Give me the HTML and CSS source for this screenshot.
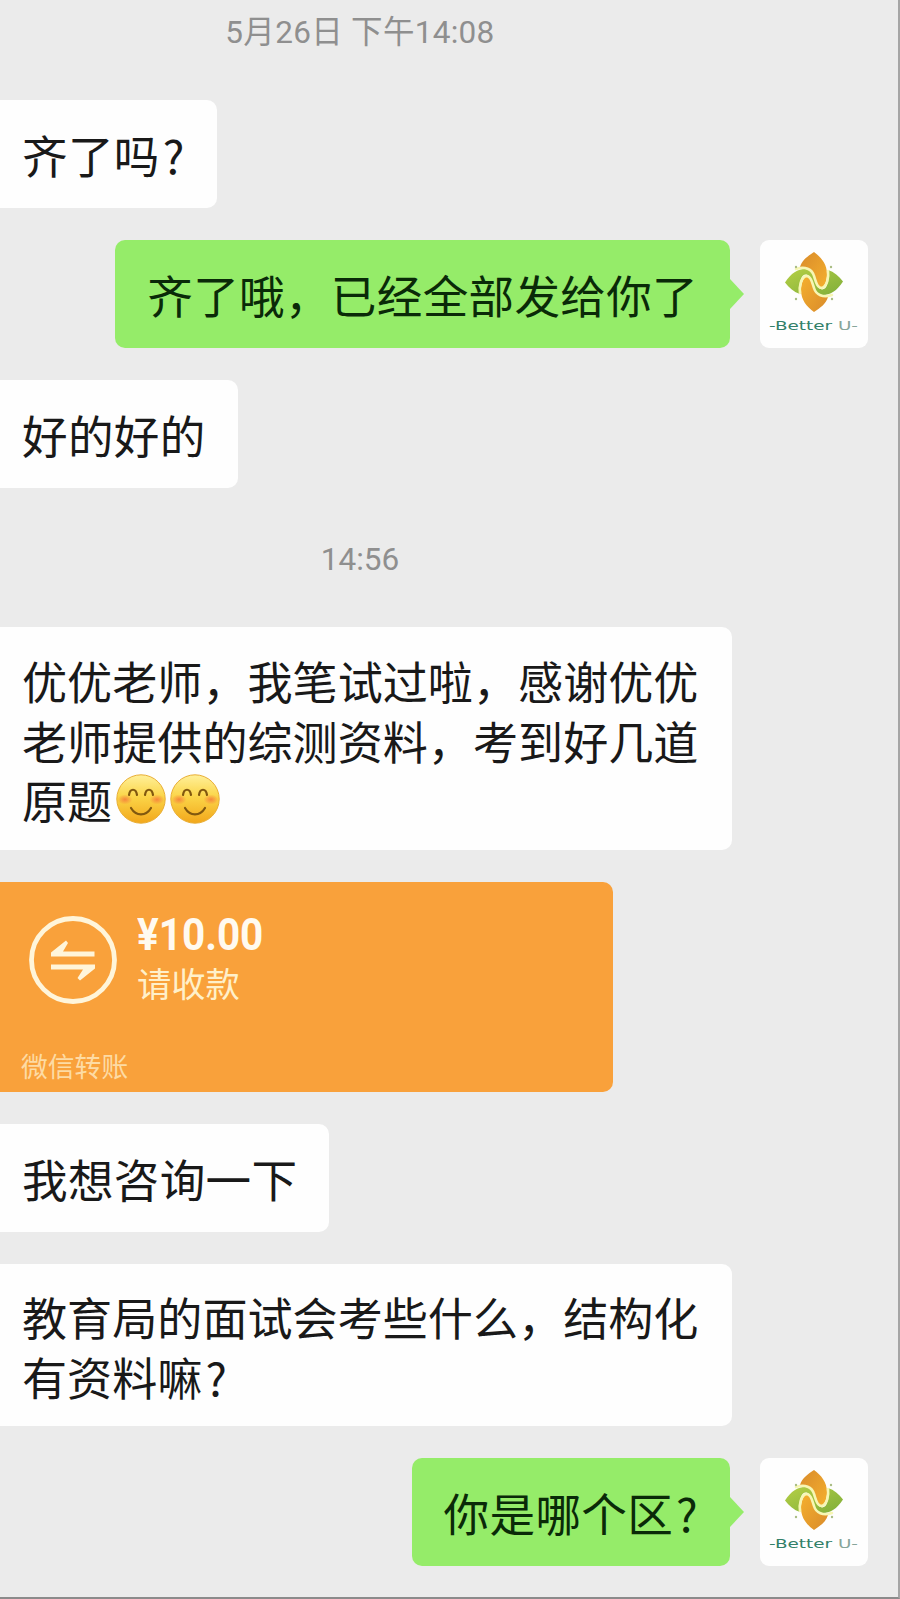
FILE: index.html
```html
<!DOCTYPE html>
<html lang="zh-CN">
<head>
<meta charset="utf-8">
<title>聊天</title>
<link rel="stylesheet" href="styles.css">
</head>
<body>
<svg class="defs" width="0" height="0" aria-hidden="true">
  <defs>
    <linearGradient id="gold" x1="0" y1="0" x2="1" y2="1"><stop offset="0" stop-color="#d98b2b"/><stop offset="1" stop-color="#f5b02e"/></linearGradient>
    <linearGradient id="leaf" x1="0" y1="0" x2="1" y2="1"><stop offset="0" stop-color="#b5cf45"/><stop offset="1" stop-color="#7fae3a"/></linearGradient>
    <linearGradient id="face" x1="0" y1="0" x2="0" y2="1"><stop offset="0" stop-color="#fff09a"/><stop offset=".45" stop-color="#fbd548"/><stop offset="1" stop-color="#f2a71b"/></linearGradient>
    <radialGradient id="blush"><stop offset="0" stop-color="#f57a3c" stop-opacity=".85"/><stop offset="1" stop-color="#f57a3c" stop-opacity="0"/></radialGradient>
    <symbol id="smile" viewBox="0 0 54 54">
      <circle cx="27" cy="27" r="24.2" fill="url(#face)" stroke="#e9ae35" stroke-width="1"/>
      <ellipse cx="11" cy="27.500" rx="7.500" ry="5" fill="url(#blush)"/><ellipse cx="43" cy="27.500" rx="7.500" ry="5" fill="url(#blush)"/>
      <g fill="none" stroke="#81580f" stroke-width="2.200" stroke-linecap="round"><path d="M15 23c1-7 7-7 8 0M31 23c1-7 7-7 8 0"/><path d="M17 36c5 8.500 15 8.500 20 0"/></g>
    </symbol>
    <symbol id="logo" viewBox="0 0 108 108">
      <path d="M54 12C61 17 67 24 67 34C67 40 65 46 61 49C55 46 55 34 49 30C46 28 43 27 40 27C42 20 48 16 54 12Z" fill="url(#gold)"/>
      <path d="M54 12C61 17 67 24 67 34C67 40 65 46 61 49C55 46 55 34 49 30C46 28 43 27 40 27C42 20 48 16 54 12Z" fill="url(#gold)" transform="rotate(180 54 42)"/>
      <path d="M25 42.500C31 33 38 29 45 29C56 30 54 43 59 48C62 51 66 49 67 45C69 40 69 35 68 30C74 32 79 36 83 41.500C77 51 70 55 63 55C52 54 54 41 49 36C46 33 42 35 41 39C39 44 39 49 40 54C34 52 29 48 25 42.500Z" fill="url(#leaf)"/>
      <g fill="none" stroke="#f7f6b4" stroke-width="2.600" stroke-linecap="round">
        <path d="M36 29C45 26 52 29 54 36C56 42 57 48 62 48C67 46 69 38 68 31"/>
        <path d="M72 55C63 58 56 55 54 48C52 42 51 36 46 36C41 38 39 46 40 53"/>
      </g>
      <g fill="#a9bd84"><circle cx="36" cy="27" r="1.200"/><circle cx="71" cy="27" r="1.200"/><circle cx="36" cy="59" r="1.200"/><circle cx="72" cy="59" r="1.200"/></g>
      <text class="logo-text" x="9" y="90" textLength="89" lengthAdjust="spacingAndGlyphs"><tspan fill="#328069">-Better</tspan><tspan fill="#87a59a"> U-</tspan></text>
    </symbol>
  </defs>
</svg>
<main class="chat">
  <time class="stamp stamp-date">5月26日 下午14:08</time>
  <div class="bubble in">齐了吗<span class="mark">?</span></div>
  <div class="row">
    <div class="bubble out">齐了哦，已经全部发给你了</div>
    <svg class="avatar"><use href="#logo"/></svg>
  </div>
  <div class="bubble in">好的好的</div>
  <time class="stamp stamp-time">14:56</time>
  <div class="bubble in long three">优优老师，我笔试过啦，感谢优优<br>老师提供的综测资料，考到好几道<br>原题<svg class="emoji" role="img" aria-label="微笑"><use href="#smile"/></svg><svg class="emoji" role="img" aria-label="微笑"><use href="#smile"/></svg></div>
  <section class="transfer">
    <div class="transfer-main">
      <svg class="transfer-icon" viewBox="0 0 88 88">
        <circle cx="44" cy="44" r="41.500" fill="none" stroke="#fff5da" stroke-width="4.800"/>
        <path d="M22 40.500V36.500L37 24.500L39 27L34 35.500H65.500V40.500ZM66 48.500V52.500L51 64.500L48.500 62L54 53.500H22V48.500Z" fill="#fff5da"/>
      </svg>
      <div class="transfer-text">
        <div class="amount">¥10.00</div>
        <div class="note">请收款</div>
      </div>
    </div>
    <div class="source">微信转账</div>
  </section>
  <div class="bubble in">我想咨询一下</div>
  <div class="bubble in long two">教育局的面试会考些什么，结构化<br>有资料嘛<span class="mark">?</span></div>
  <div class="row">
    <div class="bubble out">你是哪个区<span class="mark">?</span></div>
    <svg class="avatar"><use href="#logo"/></svg>
  </div>
</main>
</body>
</html>
```
FILE: styles.css
```css
* { box-sizing: border-box; }
body { margin: 0; background: #ebebeb; font-family: "Noto Sans CJK SC", sans-serif; color: #191919; }
.defs { position: absolute; }
.chat {
  width: 900px; height: 1599px; overflow: hidden;
  display: flex; flex-direction: column; align-items: flex-start; gap: 32px;
  border-right: 2px solid #a5a5a5; border-bottom: 2px solid #8b8b8b;
}
.stamp {
  width: 720px; text-align: center; color: #8f8f8f;
  font: 31.5px/40px Roboto, "Noto Sans CJK SC", sans-serif; white-space: nowrap;
}
.stamp-date { height: 68px; padding-top: 13px; letter-spacing: .3px; }
.stamp-time { height: 75px; padding-top: 20px; }
.bubble {
  flex: none; font-size: 45.6px; letter-spacing: .3px; line-height: 60px; padding: 24px 32px; height: 108px;
  white-space: nowrap; border-radius: 10px;
}
.in { background: #fefefe; padding-left: 22px; border-radius: 0 10px 10px 0; }
.mark { padding-left: 3px; }
.long { font-size: 45.1px; letter-spacing: 0; line-height: 59.5px; width: 732px; padding-top: 24px; padding-bottom: 0; }
.three { height: 223px; }
.two { height: 162px; padding-top: 23px; }
.row { width: 868px; display: flex; justify-content: flex-end; gap: 30px; }
.out { position: relative; background: #95ec69; color: #0a2a08; }
.out::after {
  content: ""; position: absolute; left: 100%; top: 39px;
  border: 15px solid transparent; border-left: 14px solid #95ec69; border-right: 0;
}
.avatar { width: 108px; height: 108px; flex: none; background: #fefefe; border-radius: 9px; }
.logo-text { font: 13px "DejaVu Sans", sans-serif; letter-spacing: 0; white-space: pre; }
.emoji { width: 54px; height: 54px; vertical-align: top; margin: 2px -2px 0 2px; }
.emoji + .emoji { margin-left: 2px; }
.transfer {
  width: 613px; height: 210px; flex: none; background: #f9a13b; border-radius: 0 10px 10px 0;
  padding: 34px 21px 0; display: flex; flex-direction: column; justify-content: space-between;
}
.transfer-main { display: flex; gap: 20px; padding-left: 8px; }
.transfer-icon { width: 88px; height: 88px; flex: none; }
.amount { font: 700 44px/38px Roboto, sans-serif; color: #fffaf0; transform: scaleX(.92); transform-origin: left; }
.note { font-size: 34.3px; line-height: 40px; padding-top: 8px; color: #fff0ca; }
.source { font-size: 26.8px; line-height: 30px; color: #fddba4; height: 41px; }
```
